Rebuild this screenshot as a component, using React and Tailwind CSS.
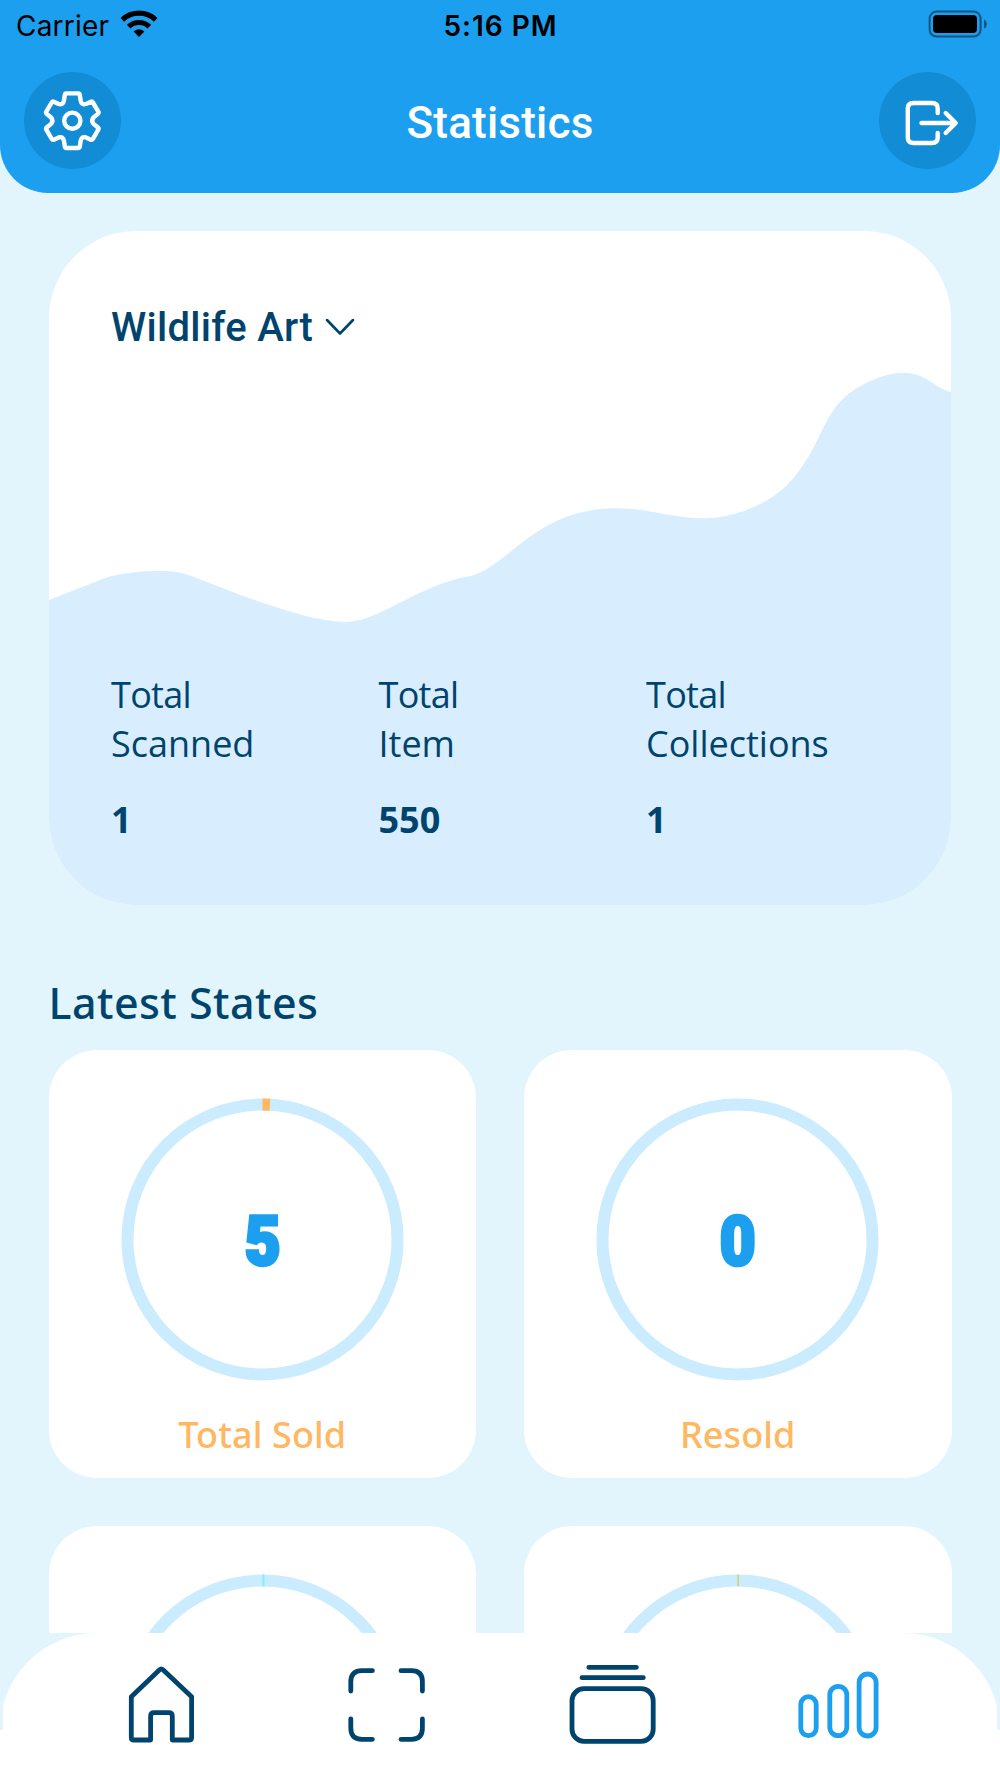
import React, { useState } from 'react';

const totals = [
  { label: 'Scanned', value: 1 },
  { label: 'Item', value: 550 },
  { label: 'Collections', value: 1 },
];

const states = [
  { id: 1, label: 'Total Sold', value: 5, arc: 7.5, color: '#ffb762' },
  { id: 2, label: 'Resold', value: 0, arc: 0, color: '#ffb762' },
  { id: 3, arc: 2, color: '#7df0ff' },
  { id: 4, arc: 1.2, color: '#c6d145' },
];

const WifiIcon = () => (
  <svg width="38" height="28" viewBox="0 0 38 28" fill="none" stroke="#000" strokeWidth="5.2">
    <path d="M2.3 9.8A24.3 24.3 0 0 1 35.7 9.8" />
    <path d="M8.6 16.6A15.2 15.2 0 0 1 29.4 16.6" />
    <path d="M13.6 21.6Q19 17 24.4 21.6L19 27Z" fill="#000" stroke="none" />
  </svg>
);

const BatteryIcon = () => (
  <svg width="60" height="28" viewBox="0 0 60 28" fill="none">
    <rect x="1.6" y="1.6" width="51" height="25" rx="7" stroke="#000" strokeOpacity="0.45" strokeWidth="2" />
    <rect x="5" y="5" width="44" height="18" rx="4" fill="#000" />
    <path d="M56 9.3Q59 11.2 59 14T56 18.7Z" fill="#000" fillOpacity="0.45" />
  </svg>
);

const SettingsIcon = () => (
  <svg width="97" height="97" viewBox="-48.3 -48.7 97 97" fill="none" stroke="#fff" strokeWidth="4.4" strokeLinejoin="round">
    <circle r="8.1" />
    <path d="M-5.8 -27.3H5.8Q7.3 -27.3 7.5 -25.8L8.3 -20.3Q9.2 -15.4 13.6 -16.7L18.5 -19Q19.8 -19.5 20.6 -18.2L26 -9Q26.7 -7.8 25.6 -6.8L21.2 -3.2Q18.6 0 21.2 3.2L25.6 6.8Q26.7 7.8 26 9L20.6 18.2Q19.8 19.5 18.5 19L13.6 16.7Q9.2 15.4 8.3 20.3L7.5 25.8Q7.3 27.3 5.8 27.3H-5.8Q-7.3 27.3 -7.5 25.8L-8.3 20.3Q-9.2 15.4 -13.6 16.7L-18.5 19Q-19.8 19.5 -20.6 18.2L-26 9Q-26.7 7.8 -25.6 6.8L-21.2 3.2Q-18.6 0 -21.2 -3.2L-25.6 -6.8Q-26.7 -7.8 -26 -9L-20.6 -18.2Q-19.8 -19.5 -18.5 -19L-13.6 -16.7Q-9.2 -15.4 -8.3 -20.3L-7.5 -25.8Q-7.3 -27.3 -5.8 -27.3Z" />
  </svg>
);

const LogoutIcon = () => (
  <svg width="97" height="97" viewBox="0 0 97 97" fill="none" stroke="#fff" strokeWidth="4.4" strokeLinecap="round" strokeLinejoin="round">
    <path d="M58.7 41V36.5Q58.7 31 53 31H34.5Q28.8 31 28.8 36.5V65.5Q28.8 71 34.5 71H53Q58.7 71 58.7 65.5V61" />
    <path d="M42.5 51H76.5M66.7 41L76.7 51L66.7 61" />
  </svg>
);

const HomeIcon = () => (
  <path d="M33.6 80V56.2Q33.6 52.7 37.1 52.7H51.8Q55.3 52.7 55.3 56.2V80H72Q74.6 80 74.6 77.4V36.7L46 9.8Q44.3 8.2 42.6 9.8L14.3 36.7V77.4Q14.3 80 16.9 80Z" />
);

const ScanIcon = () => (
  <path d="M8.8 31V21.7Q8.8 10.7 19.8 10.7H30.4M59 10.7H69.4Q80.4 10.7 80.4 21.7V31M80.4 59V68.3Q80.4 79.3 69.4 79.3H59M30.4 79.3H19.8Q8.8 79.3 8.8 68.3V59" />
);

const StackIcon = () => (
  <>
    <path d="M20.8 7.3H68.4M14 17.7H75.3" />
    <rect x="4" y="28.7" width="81.2" height="52.6" rx="12" />
  </>
);

const BarsIcon = () => (
  <>
    <rect x="7.8" y="36.7" width="15.4" height="39" rx="7.7" />
    <rect x="36.8" y="26.3" width="17" height="49.4" rx="8.5" />
    <rect x="66.1" y="14" width="17" height="62" rx="8.5" />
  </>
);

const tabs = [
  { name: 'home', Icon: HomeIcon },
  { name: 'scan', Icon: ScanIcon },
  { name: 'collections', Icon: StackIcon },
  { name: 'statistics', Icon: BarsIcon },
];

const Header = () => (
  <header className="h-[193px] shrink-0 bg-[#1c9fee] rounded-b-[48px]">
    <div className="h-[72px] pl-4 pr-3 pt-[10px] grid grid-cols-3 items-start font-['Inter',sans-serif] text-black">
      <div className="flex gap-[11px]">
        <span className="pt-px text-[28px] leading-[31px] tracking-[0.2px]">Carrier</span>
        <WifiIcon />
      </div>
      <span className="pt-px pr-[3px] text-center text-[28px] leading-[31px] font-semibold tracking-[1px]">5:16 PM</span>
      <div className="flex justify-end">
        <BatteryIcon />
      </div>
    </div>
    <div className="px-6 flex items-center justify-between">
      <button type="button" aria-label="Settings" className="size-[97px] rounded-full bg-[#138cd6]">
        <SettingsIcon />
      </button>
      <h1 className="pt-[5px] font-['Roboto',sans-serif] text-[44px] font-medium tracking-[0.2px] text-white">Statistics</h1>
      <button type="button" aria-label="Log out" className="size-[97px] rounded-full bg-[#138cd6]">
        <LogoutIcon />
      </button>
    </div>
  </header>
);

const SummaryCard = () => (
  <section className="relative mx-[0.5px] h-[674px] rounded-[87px] overflow-hidden bg-white">
    <svg className="absolute inset-0" width="902" height="674" viewBox="0 0 902 674">
      <path
        fill="#d8edfe"
        d="M0 369L55 347.5C72 341 122 336 141 344.500C177 358 254 391 297 391C330 391 370 353 422 345C462 333 488 277 568 277.300C602 277.500 620 287 654 287.300C692 287 723 269 737 255C771 221 771 188 796 166C808 155 834 141.700 854 141.700C875 141.700 882 154 902 161.300V674H0Z"
      />
    </svg>
    <div className="relative pl-[62px] pt-[73px]">
      <button type="button" className="flex items-center gap-3 font-['Roboto',sans-serif] text-[40px] leading-[48px] font-medium tracking-[0.3px]">
        Wildlife Art
        <svg width="30" height="18" viewBox="0 0 30 18" fill="none" stroke="#00446e" strokeWidth="2.6" strokeLinecap="round" strokeLinejoin="round">
          <path d="M2 1L15 14.500L28 1" />
        </svg>
      </button>
      <div className="mt-[318px] flex">
        {totals.map((item) => (
          <div key={item.label} className="w-[267.5px] text-[36px] leading-[49px]">
            <p className="tracking-[-0.7px]">Total</p>
            <p>{item.label}</p>
            <p className="mt-[27px] font-bold">{item.value}</p>
          </div>
        ))}
      </div>
    </div>
  </section>
);

const StateCard = ({ label, value, arc, color }) => {
  const length = 2 * Math.PI * 135;

  return (
    <div className="h-[428px] rounded-[48px] bg-white pt-12 flex flex-col items-center">
      <div className="grid place-items-center">
        <svg className="col-start-1 row-start-1" width="283" height="283" viewBox="0 0 283 283" fill="none" strokeWidth="12">
          <circle cx="141.5" cy="141.5" r="135" stroke="#cbebfe" />
          {arc > 0 && (
            <circle
              cx="141.5"
              cy="141.5"
              r="135"
              stroke={color}
              strokeDasharray={`${arc} ${length}`}
              transform="rotate(-90 141.5 141.5)"
            />
          )}
        </svg>
        <span className="col-start-1 row-start-1 pt-[4px] scale-x-[0.91] font-['Roboto',sans-serif] text-[68px] leading-none font-black text-[#1c9fee] [-webkit-text-stroke:3.5px_#1c9fee]">
          {value}
        </span>
      </div>
      <p className="mt-[29px] font-['Noto_Sans',sans-serif] text-[36px] leading-[49px] font-medium tracking-[0.1px] text-[#ffb762]">{label}</p>
    </div>
  );
};

const TabBar = ({ active, onChange }) => (
  <nav className="h-[145px] shrink-0 bg-white">
    <div className="h-[97px] px-[3px] bg-[#e2f5fd]">
      <div className="h-[97px] overflow-x-clip">
        <div className="-mx-[3px] h-[97px] rounded-t-[97px] bg-white px-[49px] pt-[27px] grid grid-cols-4 justify-items-center">
          {tabs.map(({ name, Icon }) => (
            <button
              key={name}
              type="button"
              aria-label={name}
              onClick={() => onChange(name)}
              className={active === name ? 'size-[90px] text-[#1c9fee]' : 'size-[90px] text-[#00446e]'}
            >
              <svg width="90" height="90" viewBox="0 0 90 90" fill="none" stroke="currentColor" strokeWidth="4.8" strokeLinecap="round" strokeLinejoin="round">
                <Icon />
              </svg>
            </button>
          ))}
        </div>
      </div>
    </div>
  </nav>
);

const App = () => {
  const [tab, setTab] = useState('statistics');

  return (
    <div className="w-[1000px] h-[1778px] flex flex-col overflow-hidden bg-[#e2f5fd] font-['Open_Sans',sans-serif] text-[#00446e]">
      <Header />
      <main className="h-[1440px] shrink-0 overflow-hidden px-[48.5px] pt-[38px]">
        <SummaryCard />
        <h2 className="mt-[69px] font-['Noto_Sans',sans-serif] text-[43px] leading-[58px] font-medium tracking-[0.45px]">Latest States</h2>
        <div className="mt-[18px] grid grid-cols-2 gap-12">
          {states.map((item) => (
            <StateCard key={item.id} {...item} />
          ))}
        </div>
      </main>
      <TabBar active={tab} onChange={setTab} />
    </div>
  );
};

export default App;
